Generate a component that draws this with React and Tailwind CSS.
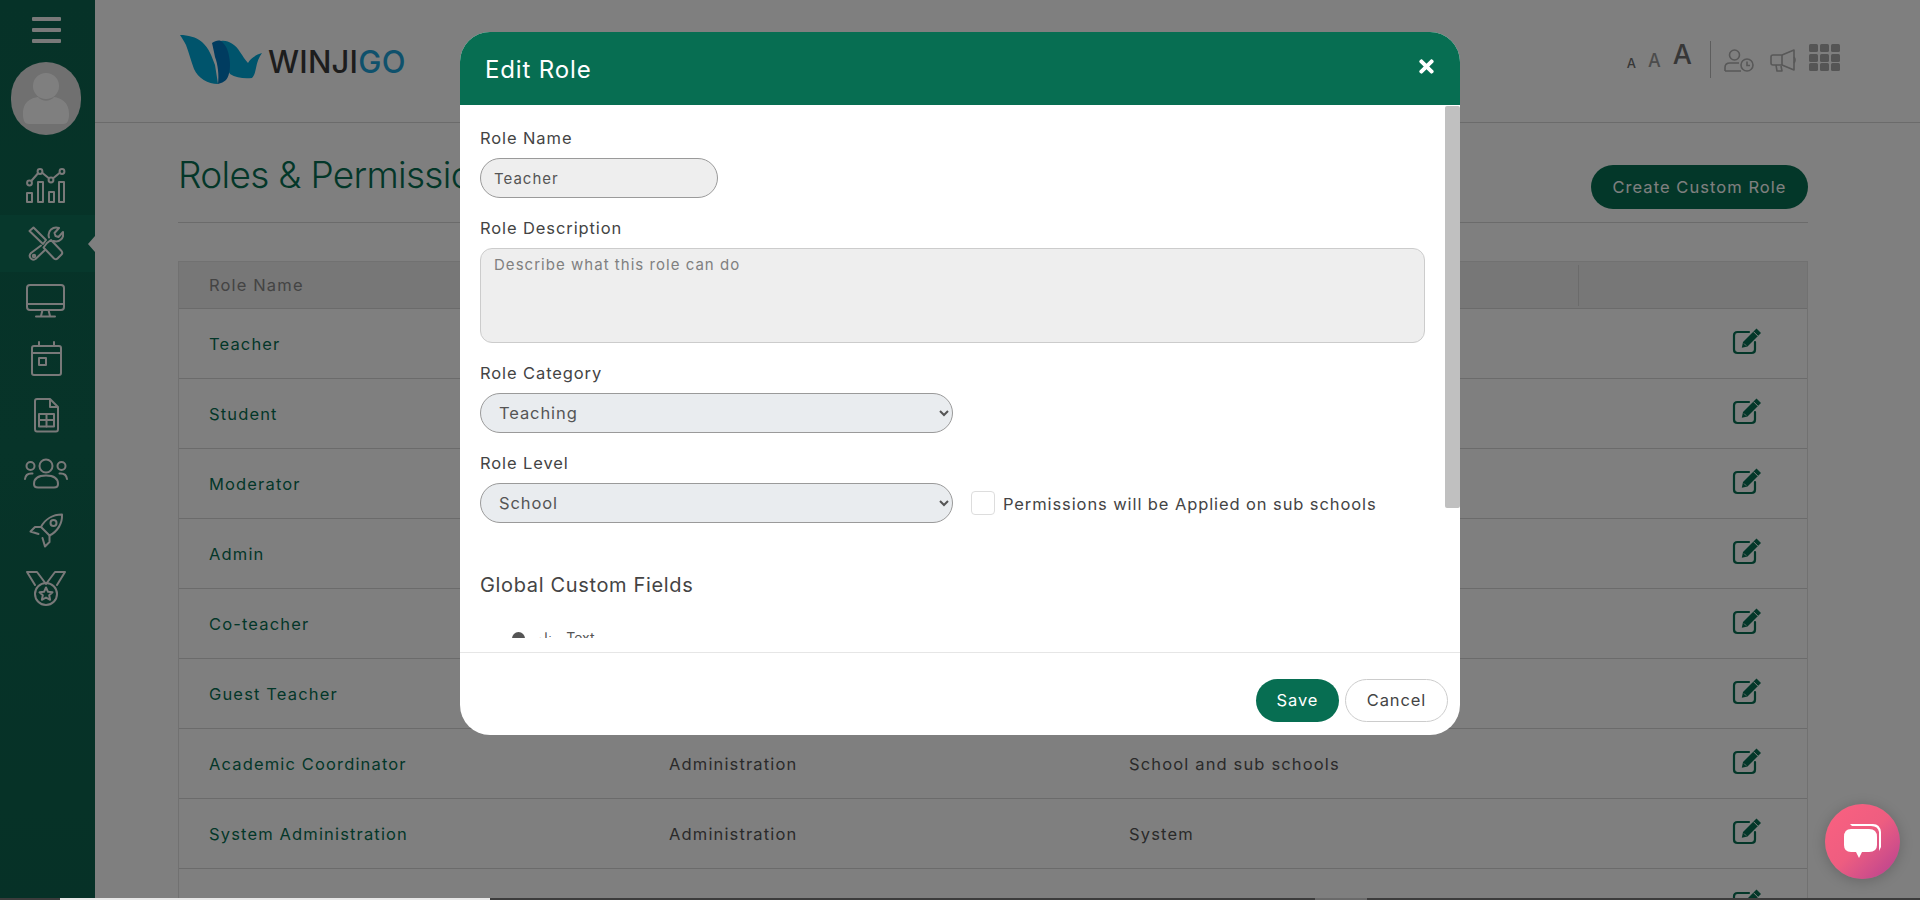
import React from "react";
import { FaTimes } from "react-icons/fa";

const rows = [
  ["Teacher", "", ""],
  ["Student", "", ""],
  ["Moderator", "", ""],
  ["Admin", "", ""],
  ["Co-teacher", "", ""],
  ["Guest Teacher", "", ""],
  ["Academic Coordinator", "Administration", "School and sub schools"],
  ["System Administration", "Administration", "System"],
  ["Coach", "Coaching", ""],
];

const S = { fill: "none", stroke: "currentColor", strokeWidth: 2, strokeLinecap: "round", strokeLinejoin: "round" };

function NavItem({ active, children }) {
  return (
    <div className={`relative h-[57.5px] flex items-center justify-center pr-[3px] ${active ? "bg-[#0e7058]" : ""}`}>
      {children}
      {active && <span className="absolute right-0 top-[21px] w-0 h-0 border-y-[8px] border-y-transparent border-r-[7px] border-r-white" />}
    </div>
  );
}

function EditIcon() {
  return (
    <svg className="-translate-y-[3px]" width="30" height="27" viewBox="0 0 30 27">
      <path d="M17 4 H5.500 Q2 4 2 7.500 V21.500 Q2 25 5.500 25 H19.500 Q23 25 23 21.500 V14" fill="none" stroke="#076f52" strokeWidth="2.200" strokeLinecap="round" />
      <path d="M24.500 0.500 L29 5 L15.500 18.500 L9.800 19.800 L11 14 Z" fill="#076f52" />
      <path d="M21.500 3.700 L25.800 8" stroke="#ffffff" strokeWidth="1" />
      <path d="M12 15.500 L14.200 17.700" stroke="#ffffff" strokeWidth="0.800" />
    </svg>
  );
}

function Sidebar() {
  return (
    <aside className="w-[95px] shrink-0 h-full bg-gradient-to-b from-[#0d6550] via-[#0e6852] to-[#0c634e] text-[#f2f2f2]">
      <div className="flex flex-col items-center pt-[17px] pr-[3px]">
        <div className="w-[29px] flex flex-col gap-[7px]">
          <span className="h-[4px] bg-[#f2f2f2] rounded-[1px]" />
          <span className="h-[4px] bg-[#f2f2f2] rounded-[1px]" />
          <span className="h-[4px] bg-[#f2f2f2] rounded-[1px]" />
        </div>
        <div className="mt-[19px] w-[70px] h-[73px] rounded-full bg-[#e0e0e0] overflow-hidden flex items-center justify-center">
          <svg width="70" height="73" viewBox="0 0 70 73">
            <circle cx="35" cy="24" r="13" fill="#ffffff" />
            <path d="M12 52 C12 38 22 36 27 35 C31 40 39 40 43 35 C50 36 58 40 58 52 C58 59 56 62 52 62 H18 C14 62 12 59 12 52 Z" fill="#ffffff" />
          </svg>
        </div>
      </div>
      <nav className="mt-[22px] flex flex-col">
        <NavItem>
          <svg width="40" height="36" viewBox="0 0 40 36" {...S}>
            <path d="M3.500 15 L14 3 L25 12 L36 3" />
            <circle cx="3.500" cy="15" r="2.400" fill="#0d6550" />
            <circle cx="14" cy="3.500" r="2.400" fill="#0d6550" />
            <circle cx="25" cy="12" r="2.400" fill="#0d6550" />
            <circle cx="36" cy="3.500" r="2.400" fill="#0d6550" />
            <rect x="1" y="25" width="5" height="9" />
            <rect x="12" y="14" width="5" height="20" />
            <rect x="23" y="24" width="5" height="10" />
            <rect x="33" y="14" width="5" height="20" />
          </svg>
        </NavItem>
        <NavItem active>
          <svg width="36" height="35" viewBox="0 0 36 35" {...S}>
            <path d="M1.500 5 L5.500 1.500 L18 14 L15 18 Z" />
            <path d="M19 17 L23 14 L33.500 25 Q35 27 33.500 28.500 L29.500 32.500 Q28 34 26 32.500 L15.500 21.500 Z" />
            <path d="M21 11.500 C19 5 25 0 31 2 L26.500 7 L27.500 10 L30.500 11 L35 6 C36.500 12 31 17 25.500 15" />
            <path d="M13 19.500 L3 27 C0 30 3 35.500 7.500 33 L17 24" />
            <circle cx="6" cy="30" r="1.200" />
          </svg>
        </NavItem>
        <NavItem>
          <svg width="40" height="34" viewBox="0 0 40 34" {...S}>
            <rect x="1" y="1" width="37" height="25" rx="3" />
            <path d="M1 20 H38 M16.500 26 L15 32 M22.500 26 L24 32 M10 32.500 H29" />
          </svg>
        </NavItem>
        <NavItem>
          <svg width="31" height="35" viewBox="0 0 31 35" {...S}>
            <rect x="1" y="5" width="29" height="29" rx="2" />
            <path d="M1 12 H30 M8 1 V5 M23 1 V5" />
            <rect x="8" y="17" width="7" height="7" />
          </svg>
        </NavItem>
        <NavItem>
          <svg width="27" height="35" viewBox="0 0 27 35" {...S}>
            <path d="M2 3 Q2 1 4 1 H17 L25 9 V31 Q25 33.500 23 33.500 H4 Q2 33.500 2 31 Z M17 1 V9 H25" />
            <rect x="6" y="16" width="15" height="12.500" />
            <path d="M6 22 H21 M13.500 16 V28.500" />
          </svg>
        </NavItem>
        <NavItem>
          <svg width="44" height="31" viewBox="0 0 44 31" {...S}>
            <circle cx="22" cy="8" r="6.500" />
            <circle cx="6.500" cy="8" r="4" />
            <circle cx="37.500" cy="8" r="4" />
            <path d="M10 26 C10 20 15 17.500 22 17.500 C29 17.500 34 20 34 26 Q34 29.500 30 29.500 H14 Q10 29.500 10 26 Z" />
            <path d="M1 21 C1.500 17 4 15 8.500 15.500 M43 21 C42.500 17 40 15 35.500 15.500" />
          </svg>
        </NavItem>
        <NavItem>
          <svg width="35" height="35" viewBox="0 0 35 35" {...S}>
            <path d="M33 1.500 C24 1.500 16 6 12 14 L20.500 22.500 C28.500 18.500 33.500 10.500 33 1.500 Z" />
            <circle cx="24.500" cy="10" r="3" />
            <path d="M12 14 L6 14 L1.500 18.500 L9.500 21 M20.500 22.500 L20.500 29 L16 33.500 L13.500 25" />
          </svg>
        </NavItem>
        <NavItem>
          <svg width="40" height="35" viewBox="0 0 40 35" {...S}>
            <path d="M1 1 H11 L20 13 L29 1 H39 L31 14 M1 1 L9 14" />
            <circle cx="20" cy="23" r="11" />
            <path d="M20 16.500 L22 20.800 L26.500 21.300 L23.200 24.300 L24.100 28.800 L20 26.500 L15.900 28.800 L16.800 24.300 L13.500 21.300 L18 20.800 Z" />
          </svg>
        </NavItem>
      </nav>
    </aside>
  );
}

function Header() {
  return (
    <header className="h-[123px] border-b border-[#d6d6d6] flex items-start justify-between pl-[83px] pr-[80px]">
      <div className="flex items-start mt-[35px]">
        <svg width="86" height="50" viewBox="0 0 86 50">
          <path d="M2 0 C10 0 18 2 24 7 C31 13 34 22 37 30 L40 49 C30 49 20 43 16 34 C13 26 11 18 8 10 C6 6 4 3 2 0 Z" fill="#00a8d8" />
          <path d="M43 6 C50 5 57 9 62 17 C65 21 67 25 70 28 C72 24 77 20 84 18 C81 22 79 27 78 33 C77 38 76 41 74 43 C67 44 58 43 52 39 L44 24 Z" fill="#00a8d8" />
          <path d="M34 8 C37 6 40 5 43 6 C47 9 50 14 51 21 C53 30 52 40 48 45 C46 47 43 48 40 49 C41 40 40 30 37 22 C36 17 35 12 34 8 Z" fill="#0078c0" />
        </svg>
        <div className="ml-[4px] mt-[8px] text-[31px] leading-[38px] font-medium tracking-[0.2px] text-[#3a3a3a]">WINJI<span className="text-[#1ea3d8]">GO</span></div>
      </div>
      <div className="flex items-start text-[#888]">
        <div className="mt-[41px] flex items-end h-[30px] text-[#6e6e6e] font-medium gap-[12px] leading-none">
          <span className="text-[13px] leading-[16px]">A</span>
          <span className="text-[18px] leading-[20px] text-[#999]">A</span>
          <span className="text-[27px] leading-[32px]">A</span>
        </div>
        <div className="ml-[18px] mt-[41px] w-px h-[37px] bg-[#bbb]" />
        <svg className="ml-[13px] mt-[49px]" width="30" height="23" viewBox="0 0 30 23" fill="none" stroke="#b0b0b0" strokeWidth="1.600">
          <circle cx="10.500" cy="6" r="5" />
          <path d="M1 22 V18.500 Q1 14 6 14 H15 M1 22 H17" />
          <circle cx="23" cy="16" r="6" fill="#fff" />
          <path d="M23 12.500 V16.500 H26" />
        </svg>
        <svg className="ml-[16px] mt-[49px]" width="27" height="23" viewBox="0 0 27 23" fill="none" stroke="#b0b0b0" strokeWidth="1.600" strokeLinejoin="round">
          <path d="M1 8 Q1 6 3 6 H12 L24 1 V21 L12 16 H3 Q1 16 1 14 Z" />
          <path d="M12 6 V16 M6 16 L7 22 H12 L11 17 M24 8 Q26 11 24 14" />
        </svg>
        <div className="ml-[12px] mt-[44px] grid grid-cols-3 gap-[1.500px] w-[31px]">
          {Array.from({ length: 9 }).map((_, i) => (
            <span key={i} className="h-[8px] rounded-[1.500px] bg-[#aaa]" />
          ))}
        </div>
      </div>
    </header>
  );
}

function Content() {
  return (
    <div className="pl-[83px] pr-[112px]">
      <div className="h-[100px] border-b border-[#d6d6d6] flex items-start justify-between">
        <h1 className="mt-[27px] text-[37px] leading-[50px] font-light text-[#076f52] tracking-[-0.7px] whitespace-nowrap">Roles &amp; Permissions</h1>
        <button className="mt-[42px] w-[217px] h-[44px] rounded-full bg-[#076f52] text-white text-[16.500px] tracking-[1.050px]">Create Custom Role</button>
      </div>
      <div className="mt-[38px] border-x border-t border-[#e2e2e2] text-[16.500px] tracking-[1.150px]">
        <div className="h-[46px] bg-[#eeeeee] grid grid-cols-[490px_460px_450px_1fr] items-center text-[#888]">
          <div className="pl-[30px]">Role Name</div>
          <div />
          <div className="h-[41px] border-r border-[#d6d6d6]" />
          <div />
        </div>
        {rows.map((r) => (
          <div key={r[0]} className="h-[70px] pt-[1px] last:pt-[4px] border-t border-[#d6d6d6] first:border-t-0 grid grid-cols-[490px_460px_450px_1fr] items-center text-[#555]">
            <div className="pl-[30px] text-[#076f52]">{r[0]}</div>
            <div>{r[1]}</div>
            <div>{r[2]}</div>
            <div className="flex justify-end pr-[45px]"><EditIcon /></div>
          </div>
        ))}
      </div>
    </div>
  );
}

function Modal() {
  return (
    <div className="absolute left-[460px] top-[32px] w-[1000px] h-[703px] bg-white rounded-[30px] overflow-hidden flex flex-col text-[16.500px] text-[#444] tracking-[0.900px]">
      <div className="h-[73px] shrink-0 bg-[#076e52] text-white flex items-center justify-between pl-[25px] pr-[23px]">
        <div className="text-[24px] leading-[30px] mt-[2px] tracking-[0.850px]">Edit Role</div>
        <FaTimes className="w-[21px] h-[21px] -mt-[4px]" />
      </div>
      <div className="relative h-[547px] pb-[14px] shrink-0">
        <div className="h-full overflow-hidden pl-[20px] pt-[21px]">
          <label className="block h-[24px] leading-[24px]">Role Name</label>
          <input readOnly value="Teacher" className="mt-[8px] block w-[238px] h-[40px] rounded-full border border-[#9a9a9a] bg-[#eeeeee] pl-[13px] text-[15px] tracking-[1px] text-[#555] outline-none" />
          <label className="block h-[24px] leading-[24px] mt-[18px]">Role Description</label>
          <textarea readOnly placeholder="Describe what this role can do" className="mt-[8px] block w-[945px] h-[95px] rounded-[12px] border border-[#cccccc] bg-[#eeeeee] pl-[13px] pt-[5px] text-[15px] tracking-[1.030px] resize-none outline-none placeholder:text-[#808080]" />
          <label className="block h-[24px] leading-[24px] mt-[18px]">Role Category</label>
          <select defaultValue="Teaching" className="mt-[8px] block w-[473px] h-[40px] rounded-full border border-[#9a9a9a] bg-[#e9ecef] pl-[14px] text-[#555] outline-none">
            <option>Teaching</option>
          </select>
          <label className="block h-[24px] leading-[24px] mt-[18px]">Role Level</label>
          <div className="mt-[8px] flex items-center">
            <select defaultValue="School" className="block w-[473px] h-[40px] rounded-full border border-[#9a9a9a] bg-[#e9ecef] pl-[14px] text-[#555] outline-none">
              <option>School</option>
            </select>
            <input type="checkbox" className="ml-[18px] w-[24px] h-[24px] appearance-none rounded-[4px] border border-[#dddddd] bg-white" />
            <span className="ml-[8px] pt-[3px]">Permissions will be Applied on sub schools</span>
          </div>
          <div className="mt-[47px] text-[20px] leading-[30px] tracking-[0.650px]">Global Custom Fields</div>
          <div className="mt-[28px] pl-[32px] flex items-center gap-[10px] text-[14px] leading-[20px] tracking-normal text-[#555]">
            <span className="w-[13px] h-[13px] rounded-full bg-[#555]" />
            <span>نام - Text</span>
          </div>
        </div>
        <div className="absolute right-0 top-[1px] w-[15px] h-[402px] rounded-[2px] bg-[#c0c0c0]" />
      </div>
      <div className="flex-1 border-t border-[#e6e6e6] flex items-start justify-end gap-[6px] pr-[12px] pt-[26px]">
        <button className="w-[83px] h-[43px] rounded-full bg-[#076e52] text-white">Save</button>
        <button className="w-[103px] h-[43px] rounded-full border border-[#cccccc] bg-white text-[#444]">Cancel</button>
      </div>
    </div>
  );
}

export default function App() {
  return (
    <div className="relative w-[1920px] h-[900px] overflow-hidden bg-white flex font-[Inter,sans-serif]">
      <Sidebar />
      <main className="flex-1 min-w-0">
        <Header />
        <Content />
      </main>
      <div className="absolute inset-0 bg-black/50" />
      <Modal />
      <div className="absolute left-[1825px] top-[804px] w-[75px] h-[75px] rounded-full bg-gradient-to-br from-[#fb6180] via-[#ee5d80] to-[#b53f90] shadow-[0_2px_14px_rgba(0,0,0,0.2)] flex items-center justify-center">
        <svg width="40" height="38" viewBox="0 0 40 38">
          <path d="M7 1 H30 Q37 1 38 9 V24 L36 28 V9 Q35 3 28 3 H9 Z" fill="#fff" />
          <path d="M8 6 H26 Q34 6 34 14 V22 Q34 29 26 29 H19 L16 35 L13 29 H8 Q1 29 1 22 V14 Q1 6 8 6 Z" fill="#fff" />
        </svg>
      </div>
      <div className="absolute left-0 right-0 bottom-0 h-[2px] bg-[#3c3c3c] flex">
        <div className="ml-[60px] w-[430px] bg-[#e8e8e8]" />
        <div className="ml-[825px] w-[52px] bg-[#6a6a6a]" />
      </div>
    </div>
  );
}
